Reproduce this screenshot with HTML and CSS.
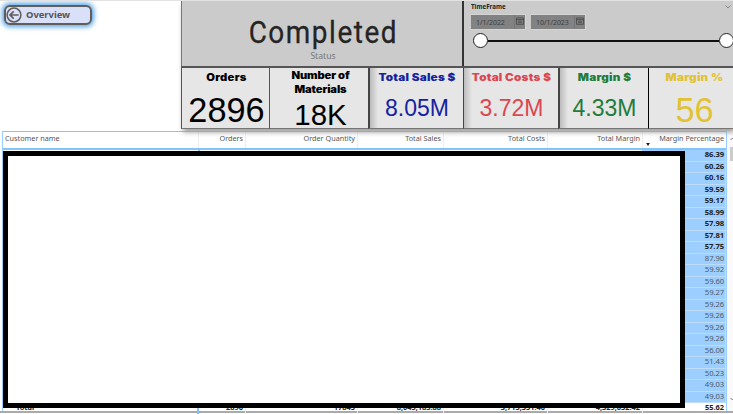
FILE: index.html
```html
<!DOCTYPE html>
<html lang="en">
<head>
<meta charset="utf-8">
<title>Overview</title>
<link rel="stylesheet" href="styles.css">
</head>
<body>
<main class="page">
  <header class="top">
    <nav class="side">
      <a class="back">
        <svg width="16" height="16" viewBox="0 0 16 16" fill="none" stroke="#605e5c"><circle cx="8" cy="8" r="6.9" stroke-width="1.5"/><path d="M12.7 8H4M7.7 4.3 4 8l3.7 3.7" stroke-width="1.7"/></svg>
        <span>Overview</span>
      </a>
    </nav>
    <div class="panel">
      <div class="filters">
        <section class="status"><h1>Completed</h1><p>Status</p></section>
        <section class="time">
          <div class="time-head"><b>TimeFrame</b><svg width="6" height="4" viewBox="0 0 6 4" fill="none" stroke="#777" stroke-width=".8"><path d="M.5.5 3 3 5.500.5"/></svg></div>
          <div class="dates">
            <div class="date"><span>1/1/2022</span><svg width="8" height="8" viewBox="0 0 8 8" fill="none" stroke="#484848" stroke-width=".8"><path d="M.5 1h7v6.300h-7zM.5 2.600h7M2 4.200h4M2 5.700h4"/></svg></div>
            <div class="date"><span>10/1/2023</span><svg width="8" height="8" viewBox="0 0 8 8" fill="none" stroke="#484848" stroke-width=".8"><path d="M.5 1h7v6.300h-7zM.5 2.600h7M2 4.200h4M2 5.700h4"/></svg></div>
          </div>
          <div class="slider"><i class="knob"></i><i class="track"></i><i class="knob"></i></div>
        </section>
      </div>
      <div class="cards">
        <section class="card"><h2>Orders</h2><p class="big">2896</p></section>
        <section class="card materials"><h2>Number of Materials</h2><p>18K</p></section>
        <section class="card shade sales"><h2>Total Sales $</h2><p>8.05M</p></section>
        <section class="card shade costs"><h2>Total Costs $</h2><p>3.72M</p></section>
        <section class="card shade margin"><h2>Margin $</h2><p>4.33M</p></section>
        <section class="card percent"><h2>Margin %</h2><p class="big">56</p></section>
      </div>
    </div>
  </header>
  <section class="report">
    <div class="table">
      <div class="row head"><span>Customer name</span><span>Orders</span><span>Order Quantity</span><span>Total Sales</span><span>Total Costs</span><span>Total Margin</span><span class="sorted">Margin Percentage</span></div>
      <div class="body">
        <div class="names"></div>
        <div class="values">
          <span class="strong">86.39</span><span class="strong">60.26</span><span class="strong">60.16</span><span class="strong">59.59</span><span class="strong">59.17</span><span class="strong">58.99</span><span class="strong">57.98</span><span class="strong">57.81</span><span class="strong">57.75</span><span>87.90</span><span>59.92</span><span>59.60</span><span>59.27</span><span>59.26</span><span>59.26</span><span>59.26</span><span>59.26</span><span>56.00</span><span>51.43</span><span>50.23</span><span>49.03</span><span>49.03</span>
        </div>
      </div>
      <div class="row total"><span>Total</span><span>2896</span><span>17845</span><span>8,045,183.88</span><span>3,715,551.46</span><span>4,329,632.42</span><span>55.62</span></div>
    </div>
    <div class="scroll"><svg width="4" height="4" viewBox="0 0 4 4" fill="none" stroke="#777"><path d="M.5 3 2.500 1 4 2.500"/></svg><i></i><svg class="down" width="4" height="4" viewBox="0 0 4 4" fill="none" stroke="#777"><path d="M.5 1 2.500 3 4 1.500"/></svg></div>
    <div class="cover"></div>
  </section>
</main>
</body>
</html>
```
FILE: styles.css
```css
* { box-sizing: border-box; }
body { margin: 0; background: #fff; font-family: "Noto Sans", "Open Sans", sans-serif; }
h1, h2, p { margin: 0; font-weight: normal; }
.page { width: 733px; height: 414px; overflow: hidden; display: flex; flex-direction: column; border-top: 1px solid #e3e3e3; }
.top { display: flex; height: 130px; flex: none; position: relative; z-index: 1; }
.side { width: 181px; padding: 4px 0 0 4px; }
.back { display: flex; align-items: center; gap: 4px; width: 88px; height: 20px; border: 2px solid #605e5c; border-radius: 6px; background: #d9e0f8; box-shadow: 0 0 5px 2px #58a5e8; color: #555; font-size: 9.400px; font-weight: 700; }
.back svg { flex: none; }
.back span { line-height: 16px; }
.panel { width: 552px; height: 128px; box-shadow: 2px 3px 5px #999; background: #e6e6e6; }
.filters { display: flex; height: 67px; border-bottom: 2px solid #555; background: #cbcbcb; }
.status { width: 283px; border-left: 1px solid #777; border-right: 2px solid #333; text-align: center; padding-top: 13px; color: #252423; }
.status h1 { font: 400 30.500px/38px Roboto, sans-serif; letter-spacing: 1.700px; padding-left: 3px; transform: scaleX(.915); -webkit-text-stroke: .3px #252423; }
.status p { font-size: 8.600px; line-height: 9px; padding-left: 2px; color: #777; }
.time { width: 269px; padding: 1px 2px 0 7px; }
.time-head { display: flex; justify-content: space-between; height: 12px; font-size: 6.200px; line-height: 10px; color: #222; }
.time-head svg { margin-top: 3px; }
.dates { display: flex; gap: 5px; }
.date { display: flex; width: 55px; height: 16px; align-items: center; justify-content: space-between; padding: 0 1px 0 5px; border: 1px solid #d4d4d4; border-left: 0; background: linear-gradient(90deg, #828282 43px, #777 43px, #777 44px, #828282 44px); color: #404040; font-size: 7.100px; letter-spacing: -.1px; }
.date svg { margin-top: -2px; flex: none; }
.slider { display: flex; align-items: center; margin: 3px -3px 0 2px; }
.knob { flex: none; width: 15px; height: 15px; border: 1.500px solid #222; border-radius: 50%; background: #fff; }
.track { flex: 1; height: 2px; background: #111; }
.cards { display: grid; grid-template-columns: 88px 99px 95px 95px 90px 85px; grid-template-rows: 61px; height: 61px; }
.card { border-left: 1px solid #555; border-bottom: 1px solid #777; text-align: center; color: #000; padding: 2px 0 0 2px; }
.card h2 { font: 900 9.800px/15px Inter, "Liberation Sans", sans-serif; letter-spacing: .25px; white-space: nowrap; transform: scaleX(1.14); }
.card p { font: 23px/26px "Liberation Sans", sans-serif; margin-top: 10px; }
.card .big { font-size: 34.300px; line-height: 40px; margin-top: 5px; }
.card.materials { padding: 1px 0 0 3px; }
.card.materials h2 { white-space: normal; padding: 0 17px; line-height: 13.500px; letter-spacing: -.1px; }
.card.materials p { font-size: 29.500px; line-height: 32px; margin-top: 3px; }
.card.shade { border-left: 2px solid #444; background: linear-gradient(90deg, #bbb, #e6e6e6 8px); padding-left: 1px; }
.shade h2, .percent h2 { letter-spacing: .2px; transform: scaleX(1.19); }
.sales { color: #1422a0; }
.card.costs { color: #dc4650; border-left-width: 1px; }
.margin { color: #217b3b; }
.card.percent { color: #e1c233; border-left-color: #000; padding-left: 7px; }
.report { position: relative; display: flex; height: 282px; border-bottom: 2px solid #aaa; }
.table { width: 725px; margin-left: 2px; border: 1px solid #9bcfff; border-top-color: #83c3fa; border-bottom: 0; }
.row { display: grid; grid-template-columns: 196px 47px 112px 86px 104px 95px 83px; text-align: right; }
.row span { padding-right: 2px; border-right: 1px solid #eee; white-space: nowrap; }
.row span:last-child { border-right: 0; padding-right: 2px; }
.row span:first-child { text-align: left; padding-left: 2px; }
.head { height: 18px; border-bottom: 2px solid #83c3fa; color: #555; font-size: 7.250px; line-height: 13px; }
.sorted { position: relative; }
.sorted::before { content: ""; position: absolute; left: 3px; top: 11px; border: 2.500px solid transparent; border-top: 3px solid #222; border-bottom: 0; }
.body { display: flex; height: 253px; }
.names { width: 197px; border-right: 2px solid #83c3fa; }
.values { margin-left: auto; width: 84px; display: grid; grid-template-rows: repeat(22, 11.500px); background: #9ccfff; }
.values span { text-align: right; padding-right: 1px; border-bottom: 1px solid #bddcf6; border-right: 1px solid #bddcf6; font-size: 7.700px; line-height: 9px; letter-spacing: -.1px; color: #505a64; }
.values .strong { font-weight: 700; color: #222; }
.total { height: 11px; font-size: 7.400px; line-height: 8px; font-weight: 700; color: #222; }
.row.total span:first-child { padding-left: 13px; border-right: 2px solid #83c3fa; }
.scroll { width: 6px; display: flex; flex-direction: column; padding-left: 3px; background: #fafafa; overflow: hidden; }
.scroll svg { margin-top: 6px; flex: none; }
.scroll i { width: 4px; height: 14px; margin-top: 6px; background: #ccc; flex: none; }
.scroll .down { margin-top: auto; margin-bottom: 10px; }
.cover { position: absolute; left: 3px; top: 20px; width: 682px; height: 257px; border: 5px solid #000; background: #fff; }
```
